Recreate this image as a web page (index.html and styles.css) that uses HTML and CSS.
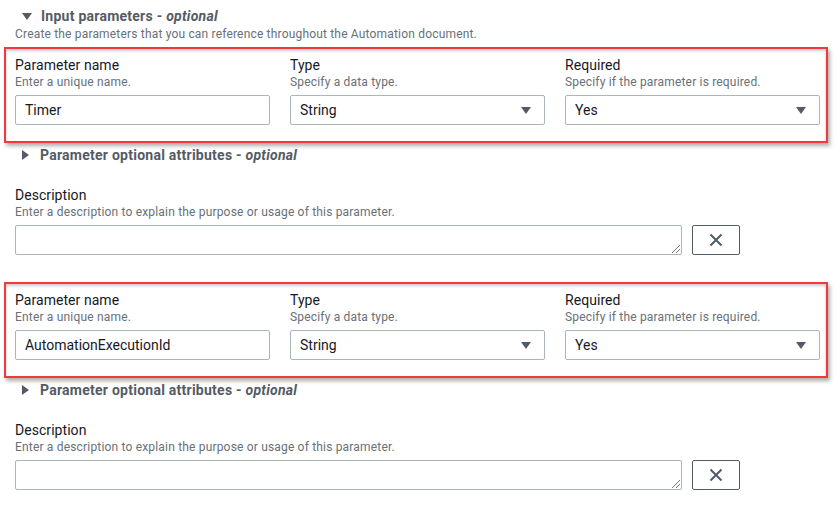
FILE: index.html
```html
<!DOCTYPE html>
<html>
<head>
<meta charset="utf-8">
<link rel="stylesheet" href="styles.css">
</head>
<body>
<div class="page">
  <div class="section-head">
    <span class="caret caret-down"></span>
    <span class="section-title">Input parameters - <em>optional</em></span>
  </div>
  <div class="section-sub">Create the parameters that you can reference throughout the Automation document.</div>

  <div class="param">
    <div class="highlight">
      <div class="field">
        <div class="label">Parameter name</div>
        <div class="hint">Enter a unique name.</div>
        <div class="input">Timer</div>
      </div>
      <div class="field">
        <div class="label">Type</div>
        <div class="hint">Specify a data type.</div>
        <div class="input select">String<span class="arrow"></span></div>
      </div>
      <div class="field">
        <div class="label">Required</div>
        <div class="hint">Specify if the parameter is required.</div>
        <div class="input select">Yes<span class="arrow"></span></div>
      </div>
    </div>
    <div class="attr-head">
      <span class="caret caret-right"></span>
      <span class="section-title">Parameter optional attributes - <em>optional</em></span>
    </div>
    <div class="desc">
      <div class="label">Description</div>
      <div class="hint">Enter a description to explain the purpose or usage of this parameter.</div>
      <div class="desc-row">
        <div class="textarea"><span class="grip"></span></div>
        <button class="remove" type="button" aria-label="Remove">
          <svg width="16" height="16" viewBox="0 0 16 16"><path d="M2.5 2.5 L13.5 13.5 M13.5 2.5 L2.5 13.5" stroke="#545b64" stroke-width="2" fill="none"/></svg>
        </button>
      </div>
    </div>
  </div>

  <div class="param">
    <div class="highlight">
      <div class="field">
        <div class="label">Parameter name</div>
        <div class="hint">Enter a unique name.</div>
        <div class="input">AutomationExecutionId</div>
      </div>
      <div class="field">
        <div class="label">Type</div>
        <div class="hint">Specify a data type.</div>
        <div class="input select">String<span class="arrow"></span></div>
      </div>
      <div class="field">
        <div class="label">Required</div>
        <div class="hint">Specify if the parameter is required.</div>
        <div class="input select">Yes<span class="arrow"></span></div>
      </div>
    </div>
    <div class="attr-head">
      <span class="caret caret-right"></span>
      <span class="section-title">Parameter optional attributes - <em>optional</em></span>
    </div>
    <div class="desc">
      <div class="label">Description</div>
      <div class="hint">Enter a description to explain the purpose or usage of this parameter.</div>
      <div class="desc-row">
        <div class="textarea"><span class="grip"></span></div>
        <button class="remove" type="button" aria-label="Remove">
          <svg width="16" height="16" viewBox="0 0 16 16"><path d="M2.5 2.5 L13.5 13.5 M13.5 2.5 L2.5 13.5" stroke="#545b64" stroke-width="2" fill="none"/></svg>
        </button>
      </div>
    </div>
  </div>
</div>
</body>
</html>
```
FILE: styles.css
```css
* { box-sizing: border-box; }
html, body { margin: 0; padding: 0; background: #fff; }
body {
  font-family: Roboto, "Liberation Sans", sans-serif;
  color: #16191f;
  width: 836px;
  height: 509px;
  overflow: hidden;
}
.page { padding: 6px 0 0 0; }

.section-head, .attr-head {
  display: flex;
  align-items: center;
  height: 20px;
  padding-left: 22px;
}
.section-title {
  font-size: 14px;
  font-weight: 700;
  color: #545b64;
  margin-left: 9px;
  letter-spacing: 0.25px;
}
.section-title em { font-style: italic; }
.caret { display: inline-block; width: 0; height: 0; }
.caret-down {
  border-left: 5px solid transparent;
  border-right: 5px solid transparent;
  border-top: 7px solid #545b64;
}
.caret-right {
  border-top: 5px solid transparent;
  border-bottom: 5px solid transparent;
  border-left: 7px solid #545b64;
  margin-right: 2px;
}
.section-sub {
  font-size: 12px;
  color: #687078;
  padding-left: 15px;
  line-height: 16px;
  letter-spacing: 0.18px;
}

.param { padding-top: 5px; }
.param + .param { padding-top: 27px; }

.highlight {
  margin-left: 4px;
  width: 824px;
  border: 2px solid #f0393d;
  box-shadow: 2px 3px 4px rgba(0,0,0,0.32), inset 0 2px 3px rgba(0,0,0,0.2);
  padding: 7px 0 16px 9px;
  display: grid;
  grid-template-columns: 255px 255px 255px;
  column-gap: 20px;
}
.label { font-size: 14px; line-height: 18px; color: #16191f; letter-spacing: 0.05px; }
.hint { font-size: 12px; line-height: 16px; color: #687078; letter-spacing: 0.18px; }
.input {
  margin-top: 5px;
  height: 30px;
  border: 1px solid #aab7b8;
  border-radius: 2px;
  font-size: 14px;
  line-height: 28px;
  padding-left: 9px;
  color: #16191f;
  position: relative;
}
.arrow {
  position: absolute;
  right: 13px;
  top: 11px;
  width: 0; height: 0;
  border-left: 5px solid transparent;
  border-right: 5px solid transparent;
  border-top: 7px solid #545b64;
}

.attr-head { margin-top: 2px; }

.desc { padding-left: 15px; margin-top: 21px; }
.desc-row { display: flex; gap: 10px; margin-top: 5px; }
.textarea {
  width: 667px;
  height: 30px;
  border: 1px solid #aab7b8;
  border-radius: 2px;
  position: relative;
}
.grip {
  position: absolute;
  right: 1px; bottom: 1px;
  width: 8px; height: 8px;
  background: linear-gradient(135deg, transparent 45%, #777 45%, #777 53%, transparent 53%, transparent 70%, #777 70%, #777 78%, transparent 78%);
}
.remove {
  width: 48px;
  height: 30px;
  border: 1px solid #545b64;
  border-radius: 2px;
  background: #fff;
  padding: 0;
  display: flex;
  align-items: center;
  justify-content: center;
}
```
